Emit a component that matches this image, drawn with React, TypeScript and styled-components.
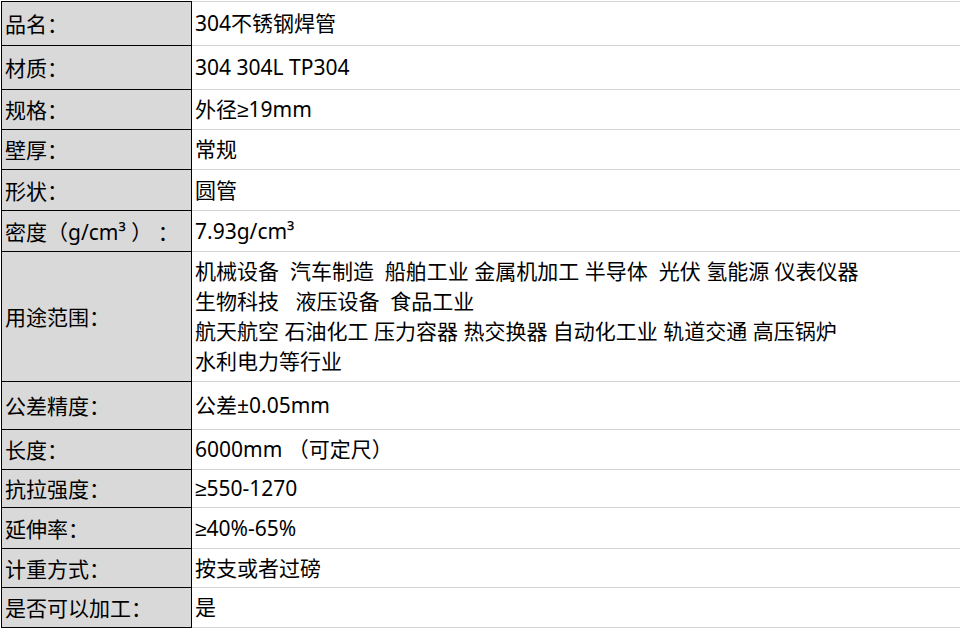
import { createGlobalStyle, styled } from "styled-components";

const GlobalStyle = createGlobalStyle`
  html, body {
    margin: 0;
    padding: 0;
    background: #ffffff;
  }
  body {
    font-family: "Noto Sans", "Liberation Sans", "Noto Sans CJK SC", sans-serif;
    color: #000000;
  }
`;

// the whole sheet, offset by one pixel like the grid lines in the shot
const Sheet = styled.div`
  margin: 1px 0 0 1px;
  width: 959px;
  display: flex;
  flex-direction: column;
`;

const Row = styled.div<{ $h: number }>`
  display: grid;
  grid-template-columns: 191px 1fr;
  height: ${({ $h }) => $h}px;
`;

const Label = styled.div<{ $first?: boolean }>`
  box-sizing: border-box;
  display: flex;
  align-items: center;
  padding: 0 0 1px 3px;
  background-color: #d9d9d9;
  border-left: 1px solid #000;
  border-right: 1px solid #000;
  border-bottom: 1px solid #000;
  border-top: ${({ $first }) => ($first ? "1px solid #000" : "none")};
  font-size: 21px;
  white-space: pre;
`;

const Value = styled.div<{ $first?: boolean }>`
  box-sizing: border-box;
  display: flex;
  flex-direction: column;
  justify-content: center;
  padding: 0 0 1px 3px;
  border-bottom: 1px solid #d4d4d4;
  border-top: ${({ $first }) => ($first ? "1px solid #d4d4d4" : "none")};
  font-size: 21px;
  line-height: 30px;
  white-space: pre;
`;

interface SpecRow {
  label: string;
  lines: string[];
  h: number;
}

const rows: SpecRow[] = [
  { label: "品名：", lines: ["304不锈钢焊管"], h: 45 },
  { label: "材质：", lines: ["304 304L TP304"], h: 44 },
  { label: "规格：", lines: ["外径≥19mm"], h: 40 },
  { label: "壁厚：", lines: ["常规"], h: 40 },
  { label: "形状：", lines: ["圆管"], h: 41 },
  { label: "密度（g/cm³ ） ：", lines: ["7.93g/cm³"], h: 41 },
  {
    label: "用途范围：",
    lines: [
      "机械设备  汽车制造  船舶工业 金属机加工 半导体  光伏 氢能源 仪表仪器",
      "生物科技   液压设备  食品工业",
      "航天航空 石油化工 压力容器 热交换器 自动化工业 轨道交通 高压锅炉",
      "水利电力等行业",
    ],
    h: 130,
  },
  { label: "公差精度：", lines: ["公差±0.05mm"], h: 48 },
  { label: "长度：", lines: ["6000mm （可定尺）"], h: 40 },
  { label: "抗拉强度：", lines: ["≥550-1270"], h: 38 },
  { label: "延伸率：", lines: ["≥40%-65%"], h: 41 },
  { label: "计重方式：", lines: ["按支或者过磅"], h: 39 },
  { label: "是否可以加工：", lines: ["是"], h: 40 },
];

export default function App() {
  return (
    <>
      <GlobalStyle />
      <Sheet>
        {rows.map((row, i) => (
          <Row key={row.label} $h={row.h}>
            <Label $first={i === 0}>{row.label}</Label>
            <Value $first={i === 0}>
              {row.lines.map((line) => (
                <span key={line}>{line}</span>
              ))}
            </Value>
          </Row>
        ))}
      </Sheet>
    </>
  );
}
